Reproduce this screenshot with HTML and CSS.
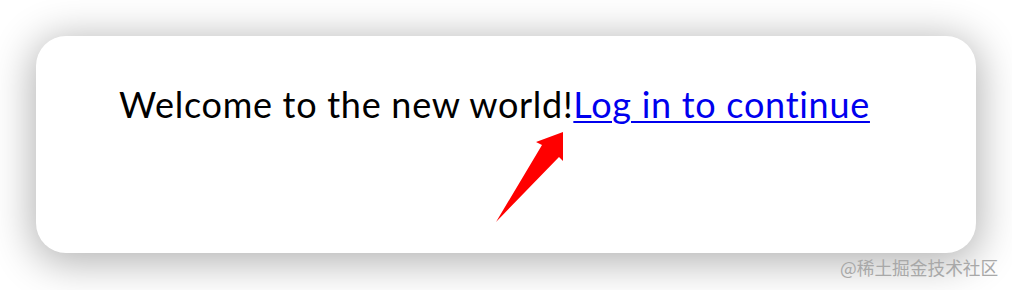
FILE: index.html
```html
<!DOCTYPE html>
<html lang="en">
<head>
<meta charset="utf-8">
<title>Welcome</title>
<link rel="stylesheet" href="styles.css">
</head>
<body>
<div class="stage">
  <div class="card">
    <p class="message">Welcome to the new world!<a href="#" class="link">Log in to continue</a></p>
  </div>
  <svg class="arrow" width="1012" height="290" viewBox="0 0 1012 290" aria-hidden="true">
    <polygon points="496,222 542,145 536,142 563,132 563,161 559,157" fill="#ff0000"/>
  </svg>
  <div class="watermark">@稀土掘金技术社区</div>
</div>
</body>
</html>
```
FILE: styles.css
```css
html, body {
  margin: 0;
  padding: 0;
  background: #ffffff;
}
.stage {
  position: relative;
  width: 1012px;
  height: 290px;
  overflow: hidden;
  padding: 36px 0 0 36px;
  box-sizing: border-box;
}
.card {
  width: 940px;
  height: 217px;
  background: #ffffff;
  border-radius: 30px;
  box-shadow: 0 6px 40px 4px rgba(0, 0, 0, 0.3);
  box-sizing: border-box;
  padding: 0 0 0 83px;
}
.message {
  margin: 0;
  padding-top: 44px;
  font-family: Lato, "Noto Sans", sans-serif;
  font-size: 36px;
  line-height: 48px;
  letter-spacing: 0.72px;
  color: #000000;
  white-space: nowrap;
}
.link {
  color: #0000ee;
  text-decoration: underline;
  text-decoration-thickness: 2px;
  text-underline-offset: 3px;
}
.arrow {
  position: absolute;
  left: 0;
  top: 0;
}
.watermark {
  position: absolute;
  left: 840px;
  top: 255px;
  font-family: "Noto Sans CJK SC", sans-serif;
  font-size: 17.7px;
  line-height: 24px;
  color: #a8a8a8;
  white-space: nowrap;
}
```
